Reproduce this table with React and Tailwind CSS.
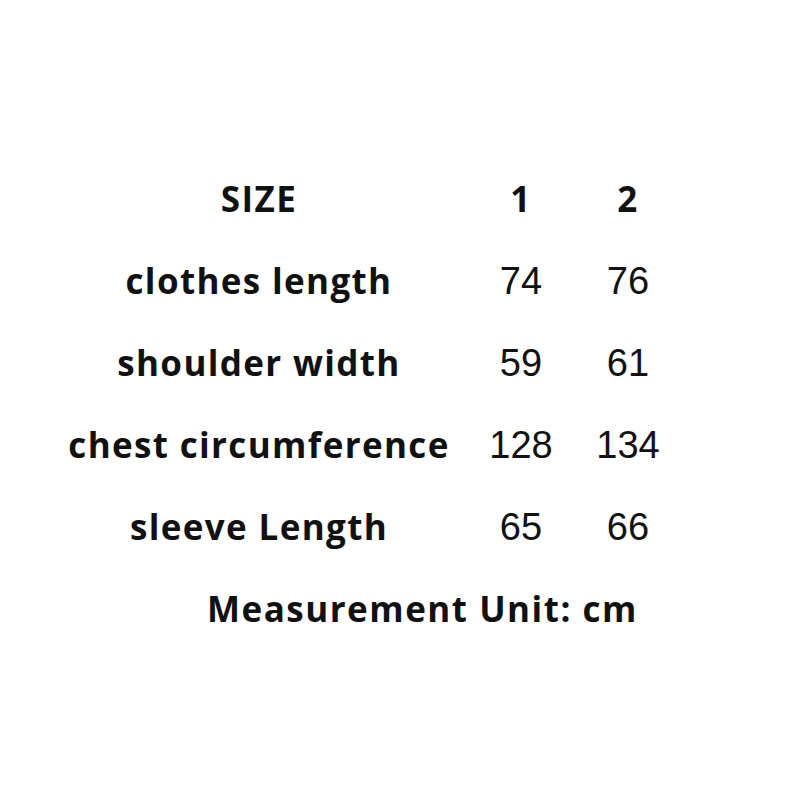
export default function App() {
  const rows = [
    ["clothes length", "74", "76"],
    ["shoulder width", "59", "61"],
    ["chest circumference", "128", "134"],
    ["sleeve Length", "65", "66"],
  ];
  return (
    <div className="w-[800px] h-[800px] bg-white text-[#111] pt-[158px]">
      <div className="flex h-[82px] items-center pl-[40px] font-['Open_Sans',sans-serif] font-bold text-[35px] tracking-[1.4px]">
        <div className="w-[438px] text-center">SIZE</div>
        <div className="w-[86px] text-center">1</div>
        <div className="w-[128px] text-center">2</div>
      </div>
      {rows.map((r) => (
        <div key={r[0]} className="flex h-[82px] items-center pl-[40px]">
          <div className="w-[438px] text-center font-['Open_Sans',sans-serif] font-bold text-[35px] tracking-[1.35px]">{r[0]}</div>
          <div className="w-[86px] text-center font-['Liberation_Sans',sans-serif] text-[38px]">{r[1]}</div>
          <div className="w-[128px] text-center font-['Liberation_Sans',sans-serif] text-[38px]">{r[2]}</div>
        </div>
      ))}
      <div className="flex h-[82px] items-center pl-[207px] font-['Open_Sans',sans-serif] font-bold text-[35px] tracking-[1.5px]">
        Measurement Unit: cm
      </div>
    </div>
  );
}
